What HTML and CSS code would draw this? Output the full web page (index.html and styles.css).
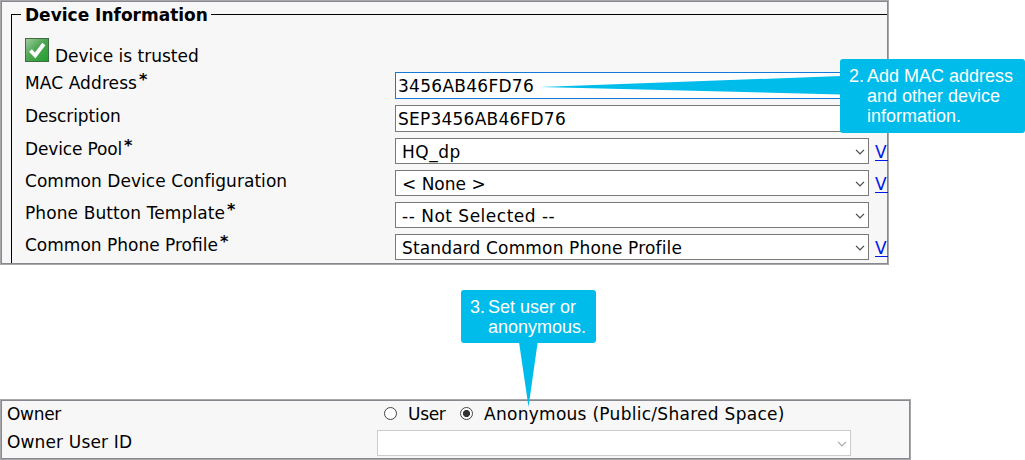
FILE: index.html
```html
<!DOCTYPE html>
<html lang="en">
<head>
<meta charset="utf-8">
<title>Device Information</title>
<link rel="stylesheet" href="styles.css">
</head>
<body>
<section class="panel device">
  <div class="group">
    <h2 class="legend">Device Information</h2>
    <div class="trusted">
      <svg class="check" width="24" height="24" viewBox="0 0 24 24">
        <defs><linearGradient id="g" x1="0" y1="0" x2="1" y2="1"><stop offset="0" stop-color="#a3cfa3"/><stop offset=".45" stop-color="#4fa653"/><stop offset="1" stop-color="#1fa02c"/></linearGradient></defs>
        <rect x=".5" y=".5" width="23" height="23" fill="url(#g)" stroke="#3f6b45"/>
        <path d="M5.5 12.5l4.7 5L18.8 6" fill="none" stroke="#fff" stroke-width="3.8"/>
      </svg>
      <span>Device is trusted</span>
    </div>
    <div class="grid">
      <label class="label ls10">MAC Address<b class="req">*</b></label>
      <div class="field input focus"><span class="ls28">3456AB46FD76</span></div>
      <label class="label tight10">Description</label>
      <div class="field input"><span class="ls23">SEP3456AB46FD76</span></div>
      <label class="label tight15">Device Pool<b class="req">*</b></label>
      <div class="field select"><span class="ls50">HQ_dp</span><svg class="chev" width="10" height="6" viewBox="0 0 10 6"><path d="M1 .9l4 4 4-4"/></svg></div>
      <a class="link">View Details</a>
      <label class="label ls05">Common Device Configuration</label>
      <div class="field select"><span>&lt; None &gt;</span><svg class="chev" width="10" height="6" viewBox="0 0 10 6"><path d="M1 .9l4 4 4-4"/></svg></div>
      <a class="link">View Details</a>
      <label class="label ls10">Phone Button Template<b class="req">*</b></label>
      <div class="field select"><span class="ls50">-- Not Selected --</span><svg class="chev" width="10" height="6" viewBox="0 0 10 6"><path d="M1 .9l4 4 4-4"/></svg></div>
      <label class="label">Common Phone Profile<b class="req">*</b></label>
      <div class="field select"><span class="ls15">Standard Common Phone Profile</span><svg class="chev" width="10" height="6" viewBox="0 0 10 6"><path d="M1 .9l4 4 4-4"/></svg></div>
      <a class="link">View Details</a>
    </div>
  </div>
</section>

<section class="panel owner">
  <div class="owner-row">
    <span class="owner-label tight30">Owner</span>
    <i class="radio"></i><span class="opt user tight30">User</span>
    <i class="radio on"></i><span class="opt ls28">Anonymous (Public/Shared Space)</span>
  </div>
  <div class="owner-row id-row">
    <span class="owner-label ls15">Owner User ID</span>
    <div class="field select disabled"><svg class="chev" width="10" height="6" viewBox="0 0 10 6"><path d="M1 .9l4 4 4-4"/></svg></div>
  </div>
</section>

<svg class="pointers" width="1025" height="460" viewBox="0 0 1025 460">
  <path d="M540 87L841 76V94.5z"/>
  <path d="M519 342H537.7L528.5 407z"/>
</svg>
<aside class="callout mac"><span class="num">2.</span><p>Add MAC address<br>and other device<br>information.</p></aside>
<aside class="callout anon"><span class="num">3.</span><p>Set user or<br>anonymous.</p></aside>
</body>
</html>
```
FILE: styles.css
```css
* { box-sizing: border-box; }
body {
  margin: 0;
  width: 1025px;
  height: 460px;
  overflow: hidden;
  position: relative;
  background: #fff;
  color: #000;
  font: 17px/20px "DejaVu Sans", sans-serif;
}
.panel {
  border: 1px solid #a6a6ab;
  box-shadow: inset 0 0 0 1px #88888e;
  background: #f7f7f7;
  overflow: hidden;
}
.device { width: 889px; height: 265px; padding: 13px 1px 1px 10px; }
.group {
  width: 876px;
  height: 249px;
  border-top: 1px solid #000;
  border-left: 1px solid #000;
}
.legend {
  width: max-content;
  margin: -10px 0 0 9px;
  padding: 0 3px 0 4px;
  background: #f7f7f7;
  font-size: 17px;
  line-height: 20px;
}
.trusted { display: flex; gap: 6px; margin: 13px 0 0 13px; height: 24px; }
.trusted span { margin-top: 8px; }
.grid {
  display: grid;
  grid-template-columns: 370px 474px 1fr;
  grid-template-rows: 27px 27px 26px 26px 26px 26px;
  row-gap: 6px;
  margin: 10px 0 0 13px;
  white-space: nowrap;
}
.label { grid-column: 1; line-height: 23px; }
.req { position: relative; top: -4px; font-size: 16px; margin-left: 2px; line-height: 1; letter-spacing: 0; }
.field {
  grid-column: 2;
  display: flex;
  align-items: center;
  justify-content: space-between;
  border: 1px solid #7a7a7a;
  background: #fff;
  padding: 1px 3px 0 6px;
  white-space: nowrap;
}
.input { padding: 0 2px; }
.focus { border-color: #1379d8; }
.chev { fill: none; stroke: #4a4a4a; stroke-width: 1.3; flex: none; }
.link {
  grid-column: 3;
  width: 12px;
  margin-left: 6px;
  line-height: 28px;
  color: #0018e8;
  text-decoration: underline 1px #0018e8;
  text-underline-offset: 2px;
}
.owner { width: 911px; height: 61px; margin-top: 134px; padding: 4px 0 0 6px; }
.owner-row { display: flex; height: 20px; }
.owner-label { width: 370px; flex: none; }
.id-row { margin-top: 6px; }
.id-row .owner-label { margin-top: 2px; }
.id-row .field { width: 474px; height: 26px; }
.disabled { justify-content: flex-end; border-color: #ccc; }
.disabled .chev { stroke: #aaa; }
.radio {
  width: 13px;
  height: 13px;
  flex: none;
  margin: 3px 11px 0 7px;
  border: 1px solid #444;
  border-radius: 50%;
  background: #fff;
}
.on { background: radial-gradient(circle, #333 3.2px, #fff 3.9px); }
.opt.user { width: 45px; }
.pointers { position: absolute; left: 0; top: 0; fill: #00bceb; }
.callout {
  position: absolute;
  display: flex;
  border-radius: 3px;
  background: #00bceb;
  color: #fff;
  font: 18px/20px "Liberation Sans", Arial, sans-serif;
}
.callout p { margin: 0; white-space: nowrap; }
.num { width: 18px; flex: none; }
.mac { left: 840px; top: 59px; width: 185px; height: 74px; padding: 7px 0 0 9px; }
.anon { left: 461px; top: 290px; width: 135px; height: 53px; padding: 7px 0 0 9px; }
.tight10 { letter-spacing: -.1px; }
.tight15 { letter-spacing: -.15px; }
.tight30 { letter-spacing: -.3px; }
.ls05 { letter-spacing: .05px; }
.ls10 { letter-spacing: .1px; }
.ls15 { letter-spacing: .15px; }
.ls23 { letter-spacing: .23px; }
.ls28 { letter-spacing: .28px; }
.ls50 { letter-spacing: .5px; }
```
